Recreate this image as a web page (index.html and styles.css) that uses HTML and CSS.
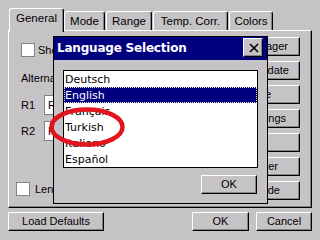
FILE: index.html
```html
<!DOCTYPE html>
<html>
<head>
<meta charset="utf-8">
<link rel="stylesheet" href="styles.css">
</head>
<body>
<div class="screen">
  <div class="tabs">
    <div class="tab active w-general">General</div>
    <div class="tab w-mode">Mode</div>
    <div class="tab w-range">Range</div>
    <div class="tab w-temp">Temp. Corr.</div>
    <div class="tab w-colors">Colors</div>
  </div>
  <div class="panel">
    <div class="left">
      <div class="check-row"><span class="box"></span><span class="lbl">Show</span></div>
      <div class="alt">Alternate</div>
      <div class="rrow"><span class="rl">R1</span><span class="edit">Rot</span></div>
      <div class="rrow r2"><span class="rl">R2</span><span class="edit">Rot</span></div>
      <div class="check-row second"><span class="box"></span><span class="lbl">Lens</span></div>
    </div>
    <div class="right">
      <div class="btn side p12">Manager</div>
      <div class="btn side p11">Update</div>
      <div class="btn side p29">Save</div>
      <div class="btn side p14">Settings</div>
      <div class="btn side p12"></div>
      <div class="btn side p22">Filter</div>
      <div class="btn side p20">Mode</div>
    </div>
  </div>
  <div class="footer">
    <div class="btn w-load">Load Defaults</div>
    <div class="spacer"></div>
    <div class="btn w-ok">OK</div>
    <div class="btn w-cancel">Cancel</div>
  </div>

  <div class="dialog">
    <div class="titlebar">
      <span class="title">Language Selection</span>
      <span class="close">
        <svg width="10" height="10" viewBox="0 0 10 10"><path d="M1 1 L9 9 M9 1 L1 9" stroke="#000" stroke-width="1.6" fill="none"/></svg>
      </span>
    </div>
    <div class="list">
      <div class="item">Deutsch</div>
      <div class="item sel">English</div>
      <div class="item">Français</div>
      <div class="item">Turkish</div>
      <div class="item">Italiano</div>
      <div class="item">Español</div>
    </div>
    <div class="dlg-foot">
      <div class="btn w-dok">OK</div>
    </div>
  </div>

  <svg class="mark" width="320" height="240" viewBox="0 0 320 240">
    <ellipse cx="87" cy="127" rx="35.5" ry="17.5" fill="none" stroke="#e2141e" stroke-width="4.5"/>
  </svg>
</div>
</body>
</html>
```

FILE: styles.css
```css
html, body {
  margin: 0;
  padding: 0;
}
body {
  width: 320px;
  height: 240px;
  overflow: hidden;
  background: #c6c3c6;
  font-family: "Liberation Sans", Arial, sans-serif;
  font-size: 11px;
  color: #000;
}
.screen {
  position: relative;
  width: 320px;
  height: 240px;
  box-sizing: border-box;
  padding: 8px 8px 0 8px;
}

/* tabs */
.tabs {
  display: flex;
  align-items: flex-end;
  gap: 1px;
  height: 22px;
  padding-left: 1px;
}
.tab {
  box-sizing: border-box;
  height: 19px;
  padding-top: 3px;
  text-align: center;
  font-size: 11.5px;
  line-height: 13px;
  border: 1px solid;
  border-color: #fff #000 transparent #fff;
  border-bottom: none;
  border-radius: 3px 3px 0 0;
  box-shadow: inset -1px 0 0 #848284;
  white-space: nowrap;
}
.tab.active {
  position: relative;
  z-index: 2;
  height: 24px;
  margin-bottom: -2px;
  padding-top: 3px;
  background: #c6c3c6;
}
.w-general { width: 55px; }
.w-mode { width: 41px; margin-left: -1px; }
.w-range { width: 46px; }
.w-temp { width: 75px; }
.w-colors { width: 44px; }

/* panel */
.panel {
  box-sizing: border-box;
  height: 178px;
  border: 1px solid;
  border-color: #fff #000 #000 #fff;
  box-shadow: inset -1px -1px 0 #848284;
  display: flex;
  justify-content: space-between;
}
.left {
  box-sizing: border-box;
  width: 44px;
  overflow: hidden;
  padding: 12px 0 0 12px;
  display: flex;
  flex-direction: column;
}
.check-row {
  display: flex;
  align-items: center;
  gap: 3px;
  height: 14px;
}
.box {
  box-sizing: border-box;
  flex: none;
  width: 14px;
  height: 14px;
  background: #fff;
  border: 1px solid #848284;
}
.lbl {
  white-space: nowrap;
  line-height: 13px;
}
.alt {
  margin-top: 15px;
  line-height: 13px;
  white-space: nowrap;
}
.rrow {
  margin-top: 10px;
  display: flex;
  align-items: center;
  height: 20px;
}
.rrow.r2 {
  margin-top: 6px;
}
.rl {
  flex: none;
  width: 23px;
  line-height: 13px;
}
.edit {
  box-sizing: border-box;
  flex: none;
  width: 80px;
  height: 20px;
  background: #fff;
  border: 1px solid #848284;
  padding: 2px 0 0 3px;
  line-height: 14px;
}
.check-row.second {
  margin-top: 41px;
  margin-left: -5px;
  gap: 5px;
}
.right {
  padding: 6px 11px 0 0;
  display: flex;
  flex-direction: column;
  gap: 5px;
}

/* buttons */
.btn {
  box-sizing: border-box;
  height: 19px;
  border: 1px solid;
  border-color: #fff #000 #000 #fff;
  box-shadow: inset -1px -1px 0 #848284;
  text-align: center;
  line-height: 16px;
  white-space: nowrap;
  overflow: hidden;
}
.btn.side {
  width: 76px;
  text-align: right;
}
.p11 { padding-right: 10px; }
.p12 { padding-right: 11px; }
.p14 { padding-right: 13px; }
.p20 { padding-right: 19px; }
.p22 { padding-right: 21px; }
.p29 { padding-right: 28px; }

.footer {
  margin-top: 4px;
  display: flex;
  gap: 7px;
}
.spacer { flex: 1; }
.w-load { width: 96px; }
.w-ok { width: 57px; }
.w-cancel { width: 56px; }

/* dialog */
.dialog {
  position: absolute;
  left: 53px;
  top: 36px;
  width: 215px;
  height: 168px;
  box-sizing: border-box;
  border: 1px solid #000;
  background: #c6c3c6;
  z-index: 5;
}
.titlebar {
  height: 23px;
  background: #000080;
  display: flex;
  justify-content: space-between;
  align-items: flex-start;
}
.title {
  padding-left: 3px;
  color: #fff;
  font-family: "DejaVu Sans", sans-serif;
  font-weight: bold;
  font-size: 12px;
  letter-spacing: -0.2px;
  line-height: 23px;
  white-space: nowrap;
}
.close {
  box-sizing: border-box;
  margin: 1px 4px 0 0;
  width: 20px;
  height: 19px;
  background: #c6c3c6;
  border: 1px solid;
  border-color: #fff #000 #000 #fff;
  box-shadow: inset -1px -1px 0 #848284;
  display: flex;
  align-items: center;
  justify-content: center;
  padding-left: 1px;
}
.close svg { display: block; }
.list {
  margin: 10px 9px 0 9px;
  height: 98px;
  box-sizing: border-box;
  border: 1px solid #000;
  background: #fff;
  font-family: "DejaVu Sans", sans-serif;
  font-size: 11px;
}
.item {
  box-sizing: border-box;
  height: 16px;
  padding: 2px 0 0 1px;
  line-height: 14px;
  white-space: nowrap;
}
.item.sel {
  background: #000080;
  color: #fff;
  outline: 1px dotted #e8e8c0;
  outline-offset: -1px;
}
.dlg-foot {
  margin-top: 7px;
  display: flex;
  justify-content: flex-end;
  padding-right: 10px;
}
.w-dok { width: 56px; }

/* annotation */
.mark {
  position: absolute;
  left: 0;
  top: 0;
  z-index: 10;
  pointer-events: none;
}
```
